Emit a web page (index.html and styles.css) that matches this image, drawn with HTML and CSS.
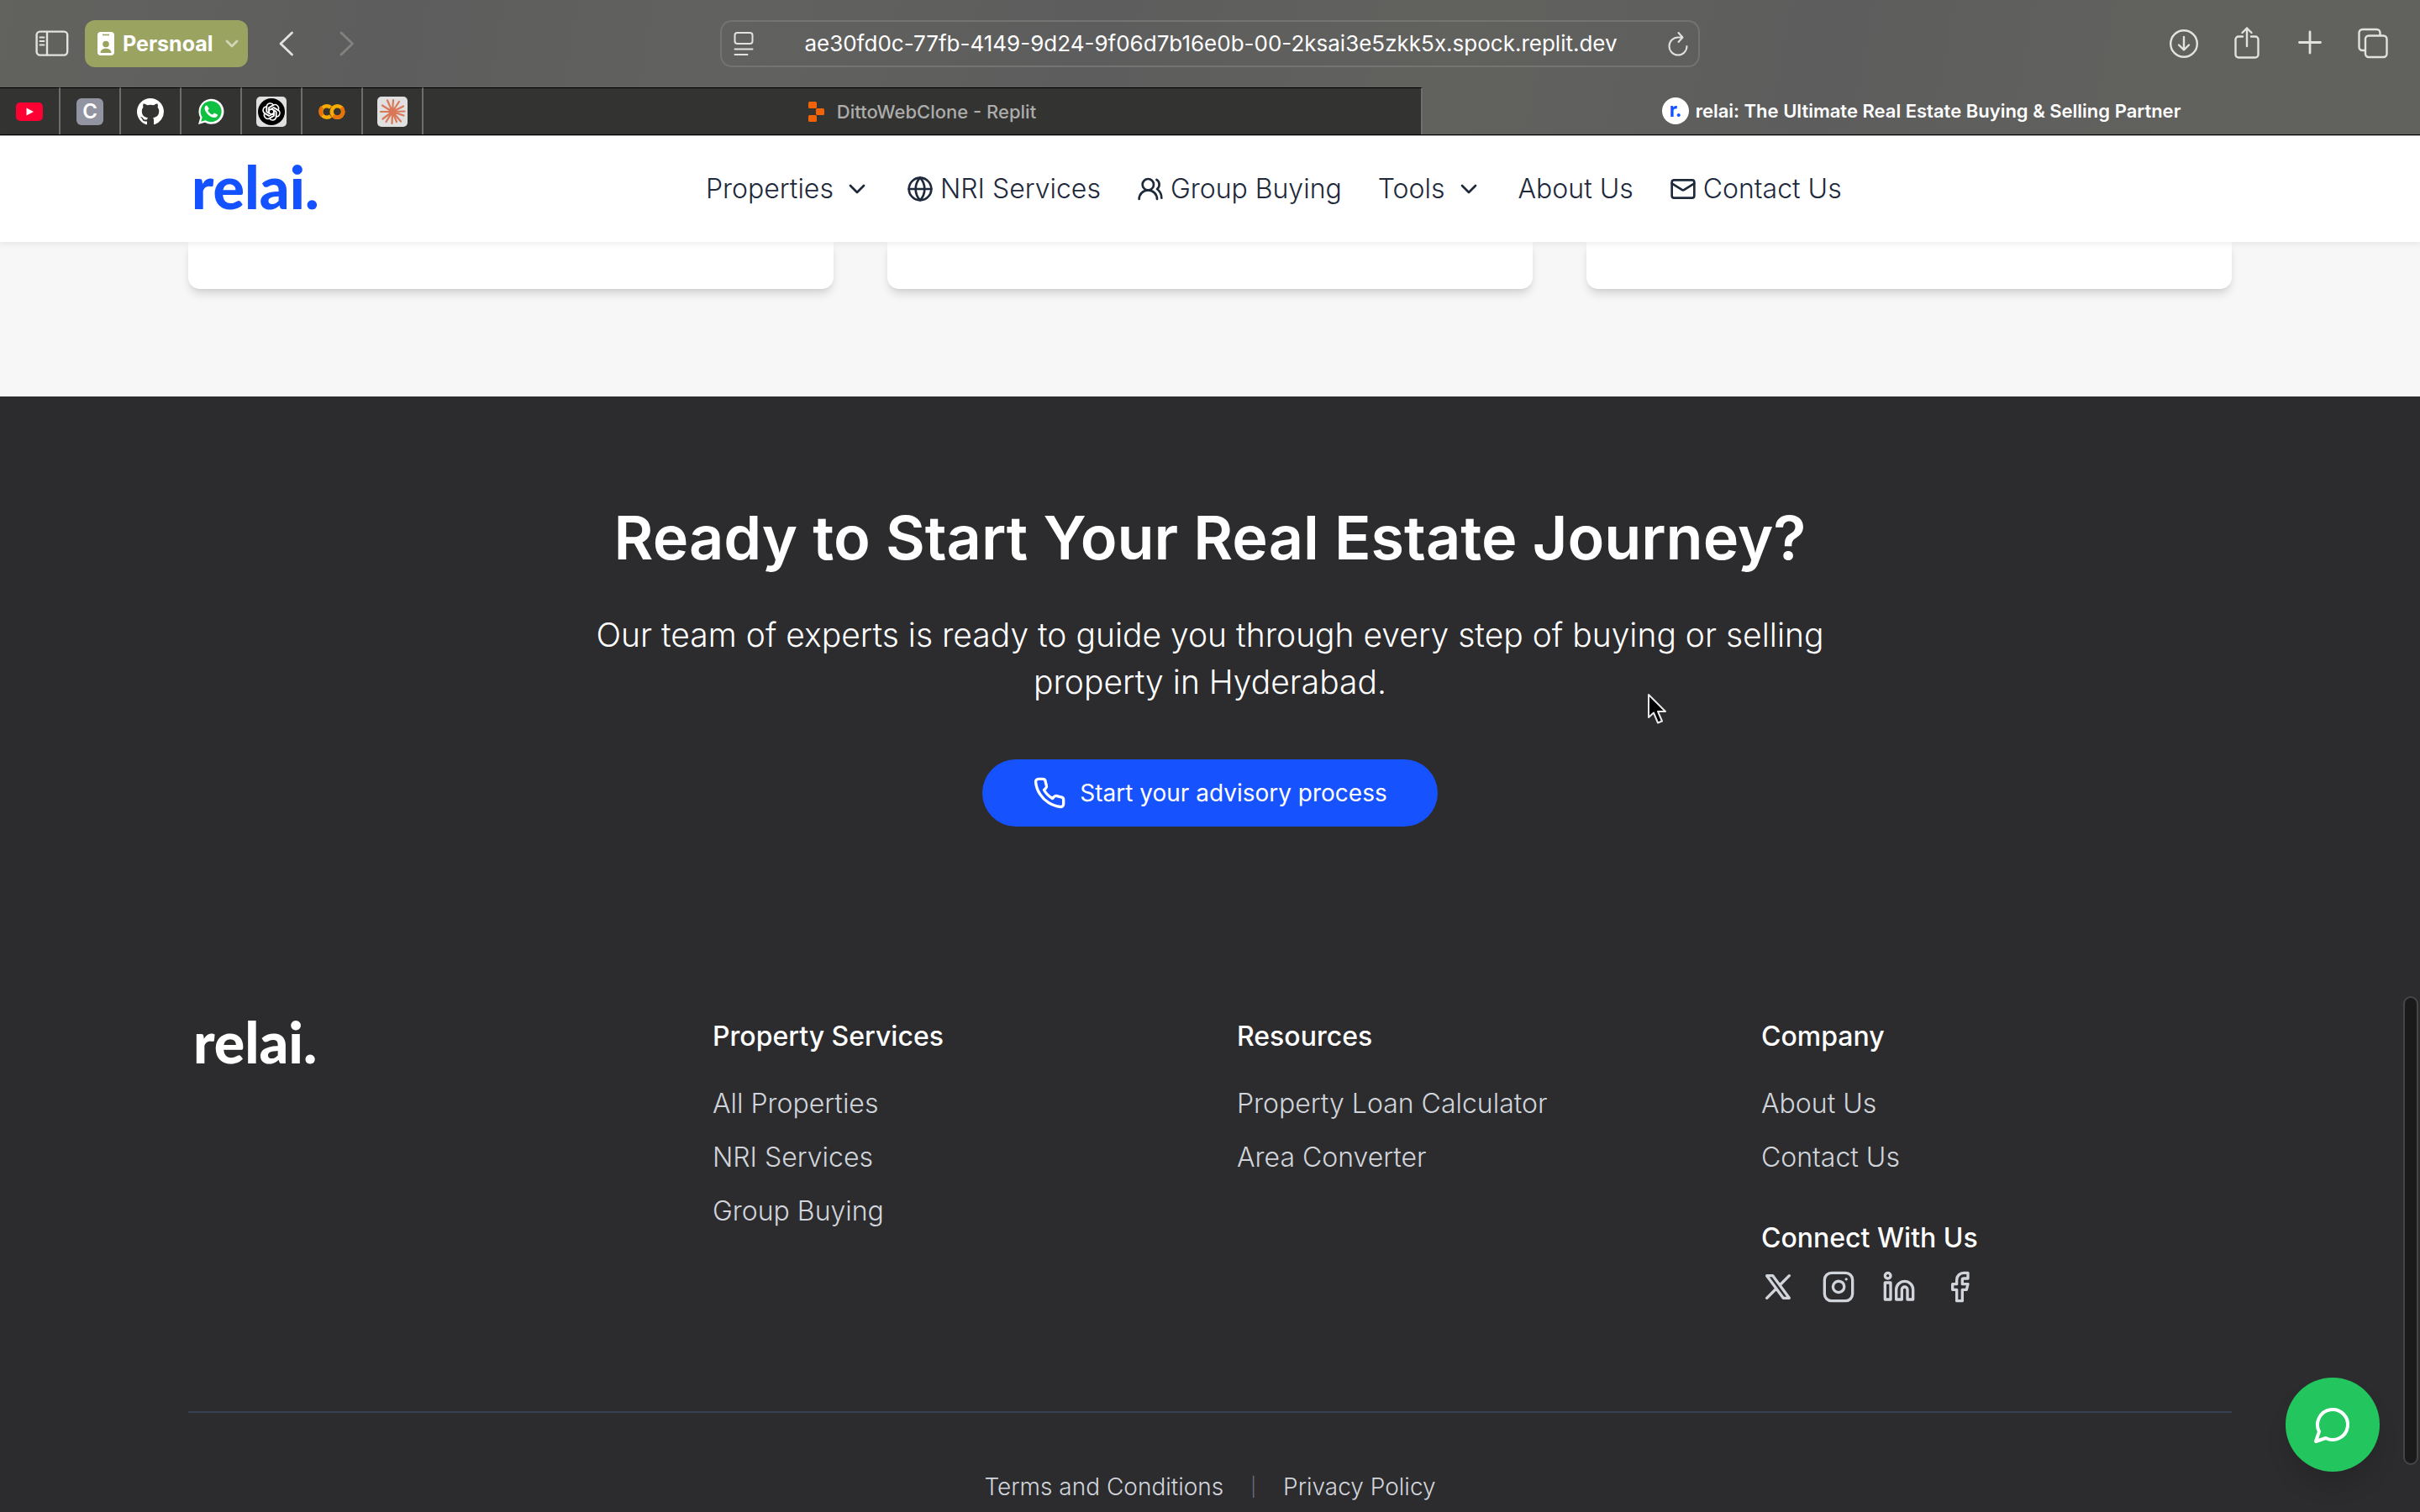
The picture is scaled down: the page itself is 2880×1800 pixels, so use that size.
FILE: index.html
```html
<!DOCTYPE html>
<html lang="en">
<head>
<meta charset="utf-8">
<title>relai: The Ultimate Real Estate Buying &amp; Selling Partner</title>
<link rel="stylesheet" href="styles.css">
</head>
<body>
<div class="browser">
  <div class="toolbar">
    <div class="toolbar-left">
      <button class="icon-btn" aria-label="Sidebar"><svg width="40" height="32" viewBox="0 0 40 32" fill="none" stroke="#e2e2e0" stroke-width="2.4"><rect x="1.6" y="1.6" width="36.6" height="28" rx="4"/><path d="M14 2v28"/><path d="M5.5 8.5h5M5.5 13h5M5.5 17.500h5" stroke-width="1.8" stroke-linecap="round"/></svg></button>
      <button class="profile">
        <svg width="20" height="28" viewBox="0 0 20 28"><rect width="20" height="28" rx="4" fill="#fff"/><path d="M6 3.500h8" stroke="#9ba361" stroke-width="1.600"/><circle cx="10" cy="14.500" r="3.800" fill="#9ba361"/><path d="M3.500 25c0-7 13-7 13 0z" fill="#9ba361"/></svg>
        <span>Persnoal</span>
        <svg class="profile-chevron" width="16" height="10" viewBox="0 0 16 10" fill="none" stroke="#d2d6b6" stroke-width="2.800" stroke-linecap="round" stroke-linejoin="round"><path d="M2 2l6 6 6-6"/></svg>
      </button>
      <button class="icon-btn" aria-label="Back"><svg width="20" height="30" viewBox="0 0 20 30" fill="none" stroke="#e2e2e0" stroke-width="2.800" stroke-linecap="round" stroke-linejoin="round"><path d="M16.500 2L3 15l13.500 13"/></svg></button>
      <button class="icon-btn forward" aria-label="Forward"><svg width="20" height="30" viewBox="0 0 20 30" fill="none" stroke="#828280" stroke-width="2.800" stroke-linecap="round" stroke-linejoin="round"><path d="M3 2l13.500 13L3 28"/></svg></button>
    </div>
    <div class="address">
      <svg width="24" height="30" viewBox="0 0 24 30" fill="none" stroke="#e2e2e0" stroke-width="2" stroke-linecap="round"><rect x="1.500" y="2" width="21" height="13" rx="3"/><path d="M1.500 21.500h21M1.500 28h15"/></svg>
      <input class="address-input" type="text" aria-label="Address" value="ae30fd0c-77fb-4149-9d24-9f06d7b16e0b-00-2ksai3e5zkk5x.spock.replit.dev">
      <button class="icon-btn" aria-label="Reload"><svg width="24" height="30" viewBox="0 0 24 30" fill="none" stroke="#e2e2e0" stroke-width="2" stroke-linecap="round" stroke-linejoin="round"><path d="M17 7.500H12a10.500 10.500 0 1 0 10.500 10.500M12.500 2l5 5.500-5 5.500"/></svg></button>
    </div>
    <div class="toolbar-right">
      <button class="icon-btn" aria-label="Downloads"><svg width="40" height="40" viewBox="0 0 40 40" fill="none" stroke="#e2e2e0" stroke-width="2.400" stroke-linecap="round" stroke-linejoin="round"><circle cx="20" cy="20" r="15.800"/><path d="M20 12v15M14 21.500l6 6 6-6"/></svg></button>
      <button class="icon-btn" aria-label="Share"><svg width="40" height="40" viewBox="0 0 40 40" fill="none" stroke="#e2e2e0" stroke-width="2.400" stroke-linecap="round" stroke-linejoin="round"><path d="M15 11.500H10a3.500 3.500 0 0 0-3.500 3.500v18a3.500 3.500 0 0 0 3.500 3.500h20a3.500 3.500 0 0 0 3.500-3.500V15a3.500 3.500 0 0 0-3.500-3.500h-5M20 23V1.500M14.500 7L20 1.500 25.500 7"/></svg></button>
      <button class="icon-btn" aria-label="New tab"><svg width="40" height="40" viewBox="0 0 40 40" fill="none" stroke="#e2e2e0" stroke-width="2.800" stroke-linecap="round"><path d="M20 6v25M7.500 18.500h25"/></svg></button>
      <button class="icon-btn" aria-label="Tab overview"><svg width="40" height="40" viewBox="0 0 40 40" fill="none" stroke="#e2e2e0" stroke-width="2.400" stroke-linejoin="round"><rect x="11" y="10.500" width="25.500" height="25.500" rx="4"/><path d="M11 28H7.500a4 4 0 0 1-4-4V7a4 4 0 0 1 4-4h17a4 4 0 0 1 4 4v3.500"/></svg></button>
    </div>
  </div>

  <div class="tabs">
    <a class="pin" href="#" aria-label="YouTube"><svg width="32" height="22" viewBox="0 0 32 22"><rect width="32" height="22" rx="5" fill="#ff0033"/><path d="M12.500 6.500v9L21 11z" fill="#fff"/></svg></a>
    <a class="pin" href="#" aria-label="C"><span class="letter-icon">C</span></a>
    <a class="pin" href="#" aria-label="GitHub"><svg width="32" height="32" viewBox="0 0 16 16" fill="#fff"><path d="M8 0C3.580 0 0 3.580 0 8c0 3.540 2.290 6.530 5.470 7.590.4.070.55-.17.55-.38 0-.19-.01-.82-.01-1.490-2.010.37-2.530-.49-2.690-.94-.09-.23-.48-.94-.82-1.130-.28-.15-.68-.52-.01-.53.63-.01 1.080.58 1.230.82.72 1.210 1.870.87 2.330.66.07-.52.28-.87.51-1.070-1.780-.2-3.640-.89-3.640-3.950 0-.87.31-1.590.82-2.150-.08-.2-.36-1.020.08-2.120 0 0 .67-.21 2.200.82.640-.18 1.320-.27 2-.27s1.360.09 2 .27c1.530-1.040 2.200-.82 2.200-.82.440 1.100.16 1.920.08 2.120.51.56.82 1.270.82 2.150 0 3.070-1.870 3.750-3.650 3.950.29.25.54.73.54 1.480 0 1.070-.01 1.930-.01 2.200 0 .21.15.46.55.38A8.010 8.010 0 0 0 16 8c0-4.420-3.580-8-8-8z"/></svg></a>
    <a class="pin" href="#" aria-label="WhatsApp"><svg width="32" height="32" viewBox="0 0 32 32"><path d="M1 31l2.300-8A15 15 0 1 1 9 28.800z" fill="#fff"/><path d="M4.200 27.800l1.500-5.200A12.500 12.500 0 1 1 9.500 26.300z" fill="#10c040"/><path d="M11.300 8.500c-.8-.4-3 .8-2.700 3.900.4 4 6 10.300 11.700 10.600 2.400 0 3.900-1.700 3.700-3.600l-4-2-2 2.200c-3-1.100-4.700-3-5.700-5.400l1.500-1.800z" fill="#fff"/></svg></a>
    <a class="pin" href="#" aria-label="ChatGPT"><svg width="36" height="36" viewBox="0 0 36 36"><rect width="36" height="36" rx="5" fill="#e0e0e0"/><circle cx="18" cy="18" r="16" fill="#000"/><g fill="none" stroke="#fff" stroke-width="1.500" stroke-linejoin="round"><path id="petal" d="M15.200 20.600v-7.700l5-2.900c4.500-1.800 8 3 5.700 6.300l-5.500-3.200-5.200 3"/><use href="#petal" transform="rotate(60 18 18)"/><use href="#petal" transform="rotate(120 18 18)"/><use href="#petal" transform="rotate(180 18 18)"/><use href="#petal" transform="rotate(240 18 18)"/><use href="#petal" transform="rotate(300 18 18)"/></g></svg></a>
    <a class="pin" href="#" aria-label="Colab"><svg width="32" height="20" viewBox="0 0 32 20" fill="none" stroke-width="4.600"><path d="M14.500 5A6.800 6.800 0 1 0 14.500 15" stroke="#f9ab00"/><path d="M4.500 4.800a6.800 6.800 0 0 0 0 10" stroke="#e8710a"/><circle cx="22.500" cy="10" r="6.800" stroke="#f9ab00"/><path d="M27.300 5.200a6.800 6.800 0 0 1-9.600 9.600" stroke="#e8710a"/></svg></a>
    <a class="pin" href="#" aria-label="Claude"><svg width="36" height="36" viewBox="0 0 36 36"><rect width="36" height="36" rx="5" fill="#e0e0e0"/><path d="M18 18L12 4.500M18 18L19 4M18 18l8-12M18 18l13-6.500M18 18l14.500-.5M18 18l13.500 4.500M18 18l10 11.500M18 18l5 12M18 18l-.5 14M18 18L10.500 30M18 18L6.500 26.500M18 18L4 18M18 18L6 10.500" stroke="#d97757" stroke-width="2.200" stroke-linecap="round"/><circle cx="18" cy="18" r="4.500" fill="#d97757"/></svg></a>
    <a class="tab" href="#"><svg width="20" height="24" viewBox="0 0 20 24" fill="#f26207"><rect x="0" y="0" width="10" height="8" rx="1.500"/><rect x="9" y="8" width="10" height="8" rx="1.500"/><rect x="0" y="16" width="10" height="8" rx="1.500"/></svg><span>DittoWebClone - Replit</span></a>
    <a class="tab tab-active" href="#"><span class="relai-icon">r.</span><span>relai: The Ultimate Real Estate Buying &amp; Selling Partner</span></a>
  </div>
</div>

<header class="site-header">
  <div class="container header-row">
    <a class="logo" href="#">relai.</a>
    <nav class="nav">
      <button class="nav-item nav-menu">Properties<svg class="chevron" viewBox="0 0 24 24"><path d="m6 9 6 6 6-6"/></svg></button>
      <a class="nav-item" href="#"><svg viewBox="0 0 24 24"><circle cx="12" cy="12" r="10"/><path d="M12 2a14.500 14.500 0 0 0 0 20 14.500 14.500 0 0 0 0-20M2 12h20"/></svg>NRI Services</a>
      <a class="nav-item" href="#"><svg viewBox="0 0 24 24"><path d="M18 21a8 8 0 0 0-16 0"/><circle cx="10" cy="8" r="5"/><path d="M22 20c0-3.370-2-6.500-4-8a5 5 0 0 0-.45-8.300"/></svg>Group Buying</a>
      <button class="nav-item nav-menu">Tools<svg class="chevron" viewBox="0 0 24 24"><path d="m6 9 6 6 6-6"/></svg></button>
      <a class="nav-item" href="#">About Us</a>
      <a class="nav-item" href="#"><svg viewBox="0 0 24 24"><rect x="2" y="4" width="20" height="16" rx="2"/><path d="m22 7-8.970 5.700a1.940 1.940 0 0 1-2.060 0L2 7"/></svg>Contact Us</a>
    </nav>
  </div>
</header>

<main>
  <section class="cards-section">
    <div class="container cards"><div class="card"></div><div class="card"></div><div class="card"></div></div>
  </section>
  <section class="cta">
    <h2>Ready to Start Your Real Estate Journey?</h2>
    <p>Our team of experts is ready to guide you through every step of buying or selling property in Hyderabad.</p>
    <button class="cta-btn"><svg viewBox="0 0 24 24"><path d="M22 16.920v3a2 2 0 0 1-2.180 2 19.790 19.790 0 0 1-8.630-3.070 19.500 19.500 0 0 1-6-6 19.790 19.790 0 0 1-3.070-8.670A2 2 0 0 1 4.110 2h3a2 2 0 0 1 2 1.720 12.840 12.840 0 0 0 .7 2.810 2 2 0 0 1-.45 2.110L8.090 9.910a16 16 0 0 0 6 6l1.270-1.270a2 2 0 0 1 2.110-.45 12.840 12.840 0 0 0 2.810.7A2 2 0 0 1 22 16.920z"/></svg>Start your advisory process</button>
  </section>
</main>

<footer class="footer">
  <div class="container">
    <div class="footer-grid">
      <div><a class="logo logo-light" href="#">relai.</a></div>
      <div>
        <h3>Property Services</h3>
        <ul><li><a href="#">All Properties</a></li><li><a href="#">NRI Services</a></li><li><a href="#">Group Buying</a></li></ul>
      </div>
      <div>
        <h3>Resources</h3>
        <ul><li><a href="#">Property Loan Calculator</a></li><li><a href="#">Area Converter</a></li></ul>
      </div>
      <div>
        <h3>Company</h3>
        <ul><li><a href="#">About Us</a></li><li><a href="#">Contact Us</a></li></ul>
        <h3 class="connect">Connect With Us</h3>
        <div class="social">
          <a href="#" aria-label="X"><svg viewBox="0 0 24 24"><path d="M4 4l11.733 16H20L8.267 4zM4 20l6.768-6.768M13.228 10.772L20 4"/></svg></a>
          <a href="#" aria-label="Instagram"><svg viewBox="0 0 24 24"><rect x="2" y="2" width="20" height="20" rx="5"/><path d="M16 11.370A4 4 0 1 1 12.630 8 4 4 0 0 1 16 11.370zM17.500 6.500h.01"/></svg></a>
          <a href="#" aria-label="LinkedIn"><svg viewBox="0 0 24 24"><path d="M16 8a6 6 0 0 1 6 6v7h-4v-7a2 2 0 0 0-4 0v7h-4v-7a6 6 0 0 1 6-6z"/><rect x="2" y="9" width="4" height="12"/><circle cx="4" cy="4" r="2"/></svg></a>
          <a href="#" aria-label="Facebook"><svg viewBox="0 0 24 24"><path d="M18 2h-3a5 5 0 0 0-5 5v3H7v4h3v8h4v-8h3l1-4h-4V7a1 1 0 0 1 1-1h3z"/></svg></a>
        </div>
      </div>
    </div>
    <div class="legal"><a href="#">Terms and Conditions</a><span class="legal-sep">|</span><a href="#">Privacy Policy</a></div>
  </div>
</footer>

<button class="chat" aria-label="Chat"><svg viewBox="0 0 24 24"><path d="M7.900 20A9 9 0 1 0 4 16.100L2 22Z"/></svg></button>
<div class="scroll-thumb"></div>
<svg class="cursor" width="26" height="38" viewBox="0 0 26 38"><path d="M2 2v27l6-5.500 5 12 5-2-5-11.500h9z" fill="#000" stroke="#e8e8e8" stroke-width="2" stroke-linejoin="round"/></svg>
</body>
</html>
```

FILE: styles.css
```css
* { box-sizing: border-box; }
body {
  margin: 0;
  min-height: 100vh;
  background: #2c2c2e;
  font-family: Inter, "Liberation Sans", sans-serif;
  font-weight: 300;
  font-size: 32px;
  line-height: 48px;
}
a { color: inherit; text-decoration: none; }
button, input { font: inherit; color: inherit; border: 0; padding: 0; background: none; }
svg { display: block; flex: none; }
h2, h3, p, ul { margin: 0; padding: 0; }
ul { list-style: none; }
.container { max-width: 2432px; margin: 0 auto; }

/* Browser window */
.browser {
  background: linear-gradient(100deg, #62625f 0%, #5d5d5d 16%, #61615f 30%, #5d5d5d 45%, #61615e 60%, #5d5d5d 75%, #61615e 90%);
  border-bottom: 1px solid #000;
  color: #fff;
}
.toolbar {
  display: grid;
  grid-template-columns: 1fr minmax(0, 1166px) 1fr;
  align-items: center;
  height: 104px;
}
.toolbar-left { display: flex; align-items: center; padding-left: 42px; }
.toolbar-right { display: flex; align-items: center; justify-content: flex-end; gap: 35px; padding-right: 36px; }
.icon-btn { display: flex; }
.profile {
  display: flex;
  align-items: center;
  gap: 10px;
  height: 56px;
  margin: 0 36px 0 19px;
  padding: 0 11px 0 15px;
  border-radius: 12px;
  background: #9ba361;
  font-size: 25px;
  font-weight: 700;
}
.profile-chevron { margin-left: 4px; }
.forward { margin-left: 52px; }
.address {
  display: flex;
  align-items: center;
  gap: 12px;
  height: 56px;
  padding: 0 12px 0 14px;
  border: 2px solid #737371;
  border-radius: 14px;
}
.address-input { flex: 1; min-width: 0; text-align: center; font-size: 26px; font-weight: 400; outline: 0; }
.tabs { display: flex; height: 56px; }
.pin { display: flex; align-items: center; justify-content: center; flex: none; width: 72px; background: #333332; border-right: 2px solid #6e6e6d; border-top: 1px solid #000; }
.letter-icon { width: 32px; height: 32px; border-radius: 6px; background: #9294a2; font-size: 24px; font-weight: 600; line-height: 32px; text-align: center; }
.tab {
  display: flex;
  flex: 1 1 0;
  align-items: center;
  justify-content: center;
  gap: 14px;
  border-top: 1px solid #000;
  border-right: 2px solid #6e6e6d;
  background: #333332;
  color: #acacab;
  font-size: 22px;
  font-weight: 500;
}
.tab-active { gap: 8px; border: 0; background: none; color: #fff; font-weight: 600; }
.relai-icon { width: 32px; height: 32px; border-radius: 50%; background: #fff; color: #1452ff; font: 900 24px/28px Lato, sans-serif; text-align: center; }

/* Site header */
.site-header { position: relative; background: #fff; border-top: 1px solid #b5b5b3; color: #1e293b; box-shadow: 0 2px 8px rgba(0, 0, 0, .08); }
.header-row { display: flex; align-items: center; height: 126px; }
.logo { display: block; flex: 0 0 25%; padding: 0 0 6px 4px; color: #1452ff; font: 900 70px/80px Lato, sans-serif; }
.nav { display: flex; align-items: center; gap: 43px; padding-left: 8px; white-space: nowrap; }
.nav-item { display: flex; align-items: center; gap: 8px; }
.nav-menu { gap: 12px; }
.nav svg, .cta-btn svg, .social svg, .chat svg { fill: none; stroke: currentColor; stroke-width: 2; stroke-linecap: round; stroke-linejoin: round; }
.nav svg { width: 32px; height: 32px; }

/* Cards */
.cards-section { padding-bottom: 128px; background: #f7f7f7; }
.cards { display: grid; grid-template-columns: repeat(3, 1fr); gap: 64px; }
.card { height: 56px; background: #fff; border-radius: 0 0 14px 14px; box-shadow: 0 8px 12px -2px rgba(0, 0, 0, .12), 0 4px 8px -4px rgba(0, 0, 0, .1); }

/* Call to action */
.cta { display: flex; flex-direction: column; align-items: center; padding: 128px 32px; color: #fff; text-align: center; }
.cta h2 { font-size: 72px; line-height: 80px; font-weight: 600; }
.cta p { max-width: 1536px; margin: 48px 0 64px; font-size: 39px; line-height: 56px; }
.cta-btn { display: flex; align-items: center; justify-content: center; gap: 16px; height: 80px; padding: 0 60px; border-radius: 40px; background: #1752ff; font-size: 28px; font-weight: 400; }
.cta-btn svg { width: 40px; height: 40px; }

/* Footer */
.footer { padding-top: 98px; color: #d1d5db; }
.footer-grid { display: grid; grid-template-columns: repeat(4, 1fr); gap: 64px; padding-bottom: 128px; }
.footer h3 { margin-bottom: 32px; color: #fff; font-size: 32px; font-weight: 500; }
.footer ul { display: grid; gap: 16px; }
.footer .connect { margin: 48px 0 14px; }
.logo-light { padding: 0 0 0 6px; color: #fff; font-size: 68px; line-height: 60px; }
.social { display: flex; gap: 32px; }
.social svg { width: 40px; height: 40px; }
.legal { display: flex; justify-content: center; gap: 32px; padding: 66px 0 8px; border-top: 2px solid #374151; font-size: 28px; line-height: 44px; }
.legal-sep { color: #6b7280; font-size: 22px; }

/* Overlays */
.chat { position: fixed; right: 48px; bottom: 48px; display: flex; align-items: center; justify-content: center; width: 112px; height: 112px; border-radius: 50%; background: #22c55e; color: #fff; box-shadow: 0 20px 30px -6px rgba(0, 0, 0, .15); }
.chat svg { width: 48px; height: 48px; }
.scroll-thumb { position: fixed; right: 2px; bottom: 56px; width: 18px; height: 31%; border: 2px solid #464648; border-radius: 9px; background: #1a1a1a; }
.cursor { position: absolute; left: 1960px; top: 825px; }
```
